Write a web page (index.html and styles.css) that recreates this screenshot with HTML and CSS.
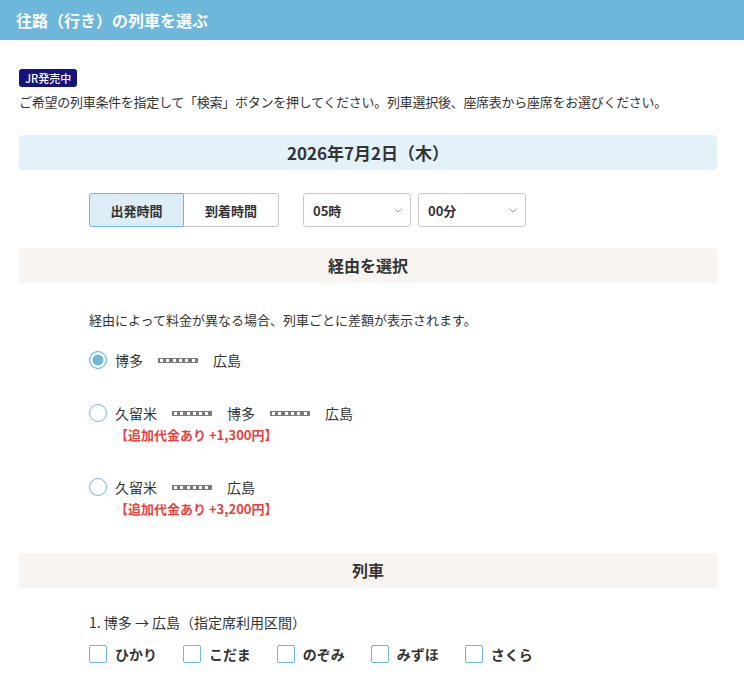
FILE: index.html
```html
<!DOCTYPE html>
<html lang="ja">
<head>
    <meta charset="UTF-8">
    <meta name="viewport" content="width=device-width, initial-scale=1.0">
    <title>往路（行き）の列車を選ぶ</title>
    <link rel="stylesheet" href="styles.css">
</head>
<body>
    <header class="page-header">
        <h1 class="page-title">往路（行き）の列車を選ぶ</h1>
    </header>

    <main class="content">
        <span class="badge">JR発売中</span>
        <p class="lead">ご希望の列車条件を指定して「検索」ボタンを押してください。列車選択後、座席表から座席をお選びください。</p>

        <div class="date-box">2026年7月2日（木）</div>

        <div class="time-row">
            <div class="toggle">
                <button class="toggle-btn active">出発時間</button>
                <button class="toggle-btn">到着時間</button>
            </div>
            <div class="select">
                <span>05時</span>
                <svg class="chevron" width="8" height="5" viewBox="0 0 8 5"><path d="M0.5 0.5 L4 4 L7.5 0.5" fill="none" stroke="#aaa" stroke-width="1"/></svg>
            </div>
            <div class="select">
                <span>00分</span>
                <svg class="chevron" width="8" height="5" viewBox="0 0 8 5"><path d="M0.5 0.5 L4 4 L7.5 0.5" fill="none" stroke="#aaa" stroke-width="1"/></svg>
            </div>
        </div>

        <h2 class="section-title">経由を選択</h2>

        <div class="inner">
            <p class="note">経由によって料金が異なる場合、列車ごとに差額が表示されます。</p>

            <div class="route first">
                <div class="route-line">
                    <span class="radio checked"></span>
                    <span>博多</span>
                    <span class="rail"></span>
                    <span>広島</span>
                </div>
            </div>

            <div class="route">
                <div class="route-line">
                    <span class="radio"></span>
                    <span>久留米</span>
                    <span class="rail"></span>
                    <span>博多</span>
                    <span class="rail"></span>
                    <span>広島</span>
                </div>
                <p class="extra">【追加代金あり +1,300円】</p>
            </div>

            <div class="route last">
                <div class="route-line">
                    <span class="radio"></span>
                    <span>久留米</span>
                    <span class="rail"></span>
                    <span>広島</span>
                </div>
                <p class="extra">【追加代金あり +3,200円】</p>
            </div>
        </div>

        <h2 class="section-title train-title">列車</h2>

        <div class="inner">
            <p class="segment">1. 博多 → 広島（指定席利用区間）</p>
            <div class="checks">
                <label class="check"><span class="box"></span>ひかり</label>
                <label class="check"><span class="box"></span>こだま</label>
                <label class="check"><span class="box"></span>のぞみ</label>
                <label class="check"><span class="box"></span>みずほ</label>
                <label class="check"><span class="box"></span>さくら</label>
            </div>
        </div>
    </main>
</body>
</html>
```

FILE: styles.css
```css
:root {
    --blue: #6cb7da;
    --blue-light: #e3f1f8;
    --beige: #f8f4f1;
    --text: #333333;
    --red: #e8403f;
    --navy: #15137c;
    --border: #c8c8c8;
}

* {
    margin: 0;
    padding: 0;
    box-sizing: border-box;
}

body {
    font-family: "Noto Sans CJK JP", "Noto Sans", sans-serif;
    color: var(--text);
    background: #ffffff;
}

.page-header {
    background: var(--blue);
    height: 40px;
    display: flex;
    align-items: center;
    padding: 0 16px;
}

.page-title {
    color: #ffffff;
    font-size: 16px;
    font-weight: 700;
    line-height: 1;
}

.content {
    padding: 29px 27px 40px 19px;
}

.badge {
    display: block;
    width: fit-content;
    background: var(--navy);
    color: #ffffff;
    font-size: 11px;
    font-weight: 500;
    line-height: 18px;
    padding: 0 6px;
    border-radius: 3px;
}

.lead {
    font-size: 13px;
    line-height: 18px;
    margin-top: 6px;
    letter-spacing: -0.27px;
}

.date-box {
    margin-top: 24px;
    height: 35px;
    line-height: 35px;
    background: var(--blue-light);
    border-radius: 4px;
    text-align: center;
    font-size: 17px;
    font-weight: 700;
}

.time-row {
    margin-top: 23px;
    padding-left: 70px;
    display: flex;
    gap: 7px;
}

.toggle {
    display: flex;
    margin-right: 17px;
}

.toggle-btn {
    width: 95px;
    height: 34px;
    font-family: inherit;
    font-size: 13px;
    font-weight: 700;
    color: var(--text);
    background: #ffffff;
    border: 1px solid var(--border);
    cursor: pointer;
}

.toggle-btn:first-child {
    border-radius: 3px 0 0 3px;
}

.toggle-btn:last-child {
    border-left: none;
    border-radius: 0 3px 3px 0;
}

.toggle-btn.active {
    background: #dcedf5;
    border-color: var(--blue);
}

.select {
    width: 108px;
    height: 34px;
    border: 1px solid var(--border);
    border-radius: 3px;
    display: flex;
    align-items: center;
    justify-content: space-between;
    padding: 0 8px 0 9px;
    font-size: 13px;
    font-weight: 700;
}

.section-title {
    margin-top: 21px;
    height: 35px;
    line-height: 35px;
    background: var(--beige);
    text-align: center;
    font-size: 16px;
    font-weight: 700;
}

.train-title {
    margin-top: 35px;
}

.inner {
    padding-left: 70px;
}

.note {
    margin-top: 28px;
    font-size: 13px;
    line-height: 18px;
}

.route {
    margin-top: 29px;
}

.route.first {
    margin-top: 19px;
}

.route.last {
    margin-top: 31px;
}

.route-line {
    display: flex;
    align-items: center;
    height: 24px;
    font-size: 14px;
    gap: 15px;
}

.radio {
    width: 18px;
    height: 18px;
    border: 1.5px solid var(--blue);
    border-radius: 50%;
    margin-right: -7px;
    flex: 0 0 auto;
}

.radio.checked {
    background: var(--blue);
    box-shadow: inset 0 0 0 2.5px #ffffff;
}

.rail {
    width: 40px;
    height: 5px;
    border: 1px solid #7a7a7a;
    border-left-width: 2px;
    background: repeating-linear-gradient(90deg, #ffffff 0 3px, #7a7a7a 3px 6.3px);
}

.extra {
    color: var(--red);
    font-size: 13px;
    font-weight: 700;
    line-height: 18px;
    margin-top: 1px;
    padding-left: 26px;
}

.segment {
    margin-top: 24px;
    font-size: 14px;
    line-height: 20px;
}

.checks {
    margin-top: 12px;
    display: flex;
    gap: 26px;
}

.check {
    display: flex;
    align-items: center;
    gap: 8px;
    font-size: 14px;
    font-weight: 700;
    height: 20px;
}

.box {
    width: 18px;
    height: 18px;
    border: 1px solid var(--blue);
    border-radius: 2px;
}
```
